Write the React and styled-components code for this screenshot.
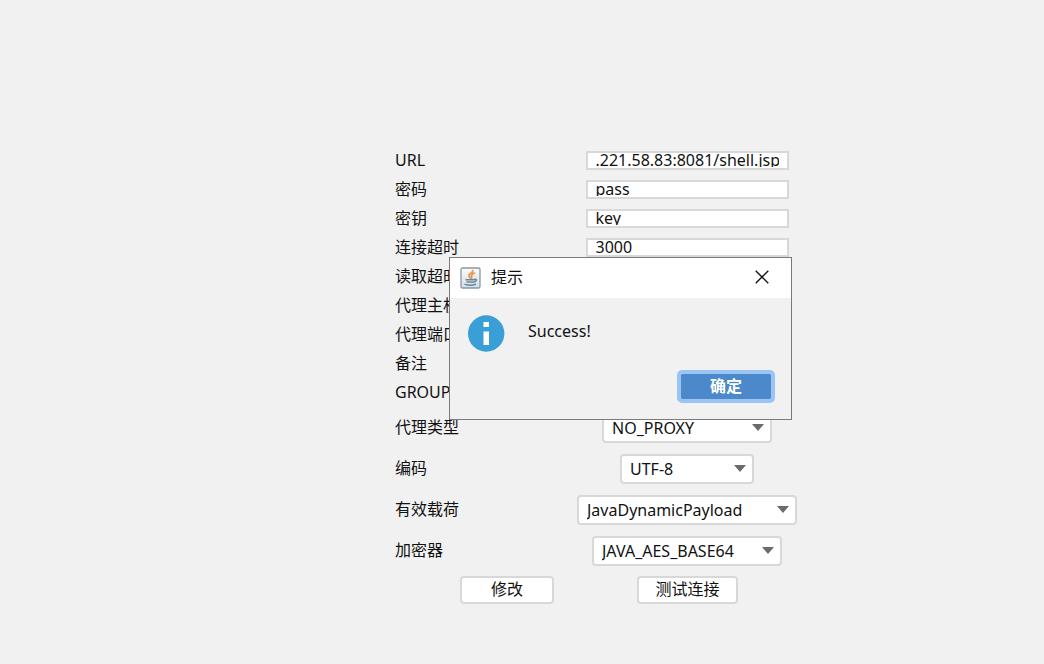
import React from 'react';
import styled, { createGlobalStyle } from 'styled-components';

const GlobalStyle = createGlobalStyle`
  * {
    box-sizing: border-box;
  }
  body {
    margin: 0;
    background-color: #f1f1f1;
    color: #111;
    font-size: 16px;
    font-family: "Noto Sans", "Noto Sans CJK SC", sans-serif;
  }
  button, input, select {
    margin: 0;
    color: inherit;
    font: inherit;
  }
`
const Page = styled.main`
  position: relative;
  min-height: 100vh;
  padding: 146px 0 40px 148px;
  display: flex;
  justify-content: center;
  align-items: flex-start;
`
const Form = styled.form`
  width: 402px;
`
const Row = styled.div`
  height: ${({ $tall }) => ($tall ? '41px' : '29px')};
  display: flex;
  align-items: center;
`
const Label = styled.label`
  width: 182px;
  flex-shrink: 0;
  padding-bottom: 2px;
  line-height: 24px;
`
const Cell = styled.div`
  flex: 1;
  display: flex;
  justify-content: center;
`
const Field = styled.div`
  display: flex;
  width: 203px;
  height: 19px;
  padding: 0 8px 1px;
  border: 2px solid #d8d8d8;
  background-color: #fff;
`
const TextInput = styled.input`
  width: 100%;
  height: 14px;
  padding: 0;
  border: 0;
  background: none;
  outline: none;
`
const SelectBox = styled.div`
  display: flex;
  align-items: center;
  width: ${({ $width }) => $width};
  height: 30px;
`
const Select = styled.select`
  appearance: none;
  width: 100%;
  height: 100%;
  padding: 0 28px 0 8px;
  border: 2px solid #d8d8d8;
  border-radius: 4px;
  background-color: #fff;
  outline: none;
`
const Arrow = styled.svg`
  flex-shrink: 0;
  width: 12px;
  height: 7px;
  margin-left: -20px;
  margin-right: 8px;
  pointer-events: none;
`
const Actions = styled.div`
  display: flex;
  gap: 83px;
  padding: 5px 0 0 65px;
`
const Button = styled.button`
  width: ${({ $width }) => $width};
  height: 28px;
  padding: 0 0 2px;
  border: 2px solid #d8d8d8;
  border-radius: 4px;
  background-color: #fff;
  line-height: 22px;
`
const Dialog = styled.section`
  position: absolute;
  top: 257px;
  left: calc(50% - 73px);
  width: 343px;
  border: 1px solid #7a7a7a;
  background-color: #f1f1f1;
`
const TitleBar = styled.header`
  height: 40px;
  display: flex;
  align-items: center;
  gap: 10px;
  padding: 0 20px 0 10px;
  background-color: #fff;
`
const Title = styled.h1`
  flex: 1;
  margin: 0;
  padding-bottom: 2px;
  line-height: 24px;
  font-size: 16px;
  font-weight: 400;
`
const CloseButton = styled.button`
  display: flex;
  padding: 0 2px 2px;
  border: 0;
  background: none;
`
const Message = styled.div`
  display: flex;
  gap: 23px;
  padding: 17px 18px 0;
`
const MessageText = styled.p`
  margin: 0;
  padding-top: 4px;
  line-height: 24px;
`
const DialogFooter = styled.footer`
  display: flex;
  justify-content: flex-end;
  padding: 18px 16px 16px;
`
const ConfirmButton = styled.button`
  width: 98px;
  height: 33px;
  padding: 0 0 2px;
  border: 4px solid #9ac4f5;
  border-radius: 5px;
  background-color: #4b89ca;
  background-clip: padding-box;
  color: #fff;
  font-weight: 700;
  line-height: 22px;
`

const fields = [
  { id: 'url', label: 'URL', value: '.221.58.83:8081/shell.jsp' },
  { id: 'password', label: '密码', value: 'pass' },
  { id: 'key', label: '密钥', value: 'key' },
  { id: 'connTimeout', label: '连接超时', value: '3000' },
  { id: 'readTimeout', label: '读取超时', value: '' },
  { id: 'proxyHost', label: '代理主机', value: '' },
  { id: 'proxyPort', label: '代理端口', value: '' },
  { id: 'remark', label: '备注', value: '' },
  { id: 'group', label: 'GROUP', value: '' },
]

const options = [
  { id: 'proxyType', label: '代理类型', value: 'NO_PROXY', width: '170px' },
  { id: 'encoding', label: '编码', value: 'UTF-8', width: '134px' },
  { id: 'payload', label: '有效载荷', value: 'JavaDynamicPayload', width: '220px' },
  { id: 'cryption', label: '加密器', value: 'JAVA_AES_BASE64', width: '190px' },
]

const JavaIcon = () => (
  <svg width="21" height="22" viewBox="0 0 21 22" fill="none">
    <defs>
      <linearGradient id="java-bg" x1="0" y1="0" x2="0" y2="1">
        <stop offset="0" stopColor="#fafafa" />
        <stop offset="1" stopColor="#d6dde2" />
      </linearGradient>
    </defs>
    <rect x="1" y="1" width="19" height="20" rx="1.5" fill="url(#java-bg)" stroke="#8799a6" strokeWidth="1.3" />
    <path d="M12.8 3.6c.4 2.2-4.4 3-3.9 5.2.1 1 1.2 1.4 1.6 2.3M14.4 6.2c-2.2.8-3.4 1.8-2.8 3 .3.7.3 1.2-.2 1.9" stroke="#e99a55" strokeWidth="1.9" strokeLinecap="round" />
    <path d="M6 12.8h8.5M7 14.9h6.5M14.6 12.2c2.6-.4 2.3 2.2-.4 2.7M5 17.4c3 .9 8 .9 10.5-.2" stroke="#66889d" strokeWidth="1.5" strokeLinecap="round" />
  </svg>
)

const InfoIcon = () => (
  <svg width="37" height="37" viewBox="0 0 37 37">
    <circle cx="18.2" cy="18.5" r="18.2" fill="#399fd6" />
    <path d="M15.5 7h5.5v5h-5.5zM15.5 16.5h5.5V30h-5.5z" fill="#fff" />
  </svg>
)

const App = () => (
  <>
    <GlobalStyle />
    <Page>
      <Form onSubmit={e => e.preventDefault()}>
        {fields.map(({ id, label, value }) => (
          <Row key={id}>
            <Label htmlFor={id}>{label}</Label>
            <Cell>
              <Field>
                <TextInput id={id} type="text" defaultValue={value} />
              </Field>
            </Cell>
          </Row>
        ))}
        {options.map(({ id, label, value, width }) => (
          <Row key={id} $tall>
            <Label htmlFor={id}>{label}</Label>
            <Cell>
              <SelectBox $width={width}>
                <Select id={id} defaultValue={value}>
                  <option>{value}</option>
                </Select>
                <Arrow viewBox="0 0 12 7">
                  <path d="M0 0h12L6 7z" fill="#6b6b6b" />
                </Arrow>
              </SelectBox>
            </Cell>
          </Row>
        ))}
        <Actions>
          <Button type="button" $width="94px">修改</Button>
          <Button type="button" $width="101px">测试连接</Button>
        </Actions>
      </Form>
      <Dialog role="dialog" aria-labelledby="dialog-title">
        <TitleBar>
          <JavaIcon />
          <Title id="dialog-title">提示</Title>
          <CloseButton type="button" aria-label="关闭">
            <svg width="14" height="14" viewBox="0 0 14 14">
              <path d="M.7.7l12.6 12.6M13.3.7L.7 13.3" stroke="#111" strokeWidth="1.3" />
            </svg>
          </CloseButton>
        </TitleBar>
        <Message>
          <InfoIcon />
          <MessageText>Success!</MessageText>
        </Message>
        <DialogFooter>
          <ConfirmButton type="button">确定</ConfirmButton>
        </DialogFooter>
      </Dialog>
    </Page>
  </>
)

export default App;
